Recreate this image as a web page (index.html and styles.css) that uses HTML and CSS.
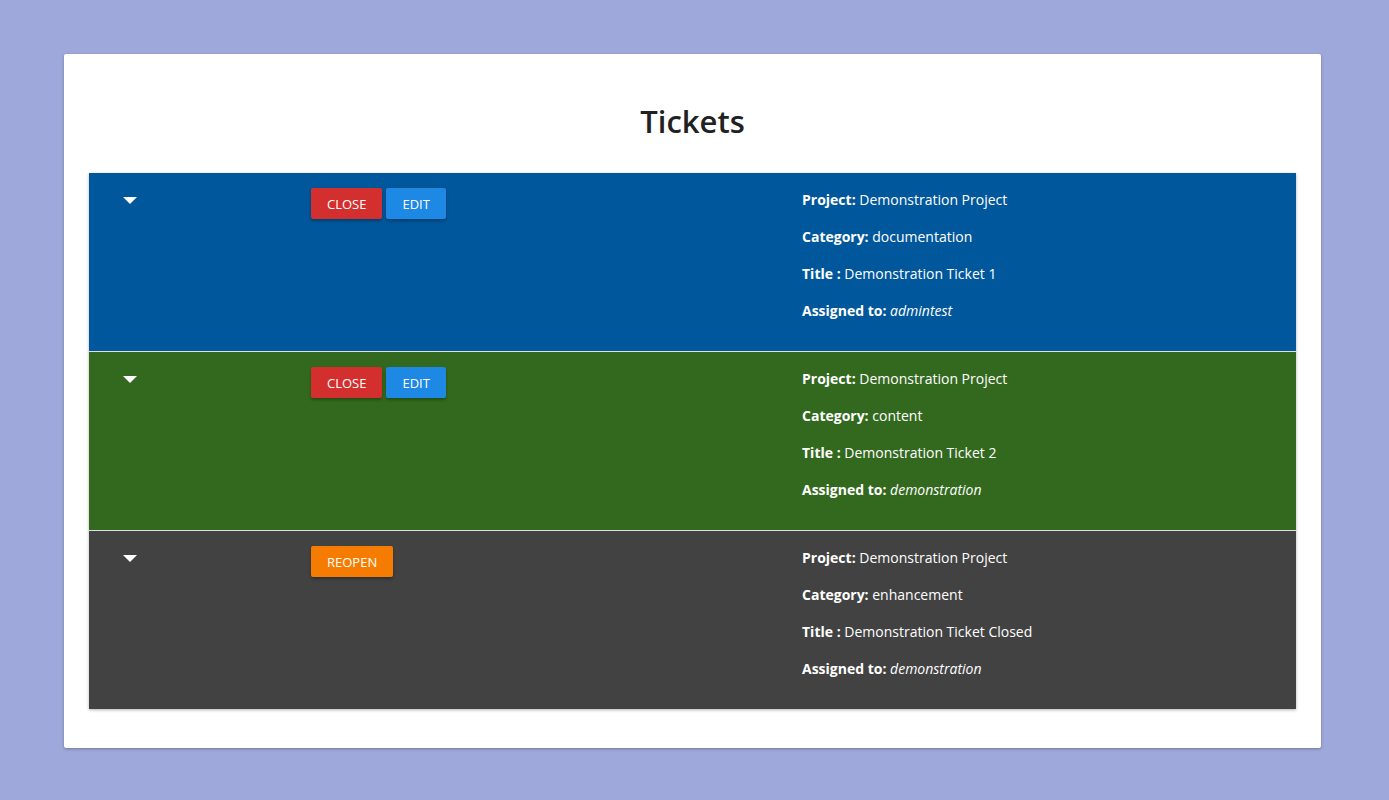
FILE: index.html
```html
<!DOCTYPE html>
<html>
<head>
<meta charset="utf-8">
<link rel="stylesheet" href="styles.css">
</head>
<body>
<div class="card">
  <h1 class="title">Tickets</h1>
  <div class="table">
    <div class="row row-blue">
      <div class="cell-toggle"><span class="caret"></span></div>
      <div class="cell-actions">
        <button class="btn btn-red">Close</button>
        <button class="btn btn-blue">Edit</button>
      </div>
      <div class="cell-info">
        <p><b>Project:</b> Demonstration Project</p>
        <p><b>Category:</b> documentation</p>
        <p><b>Title :</b> Demonstration Ticket 1</p>
        <p><b>Assigned to:</b> <i>admintest</i></p>
      </div>
    </div>
    <div class="row row-green">
      <div class="cell-toggle"><span class="caret"></span></div>
      <div class="cell-actions">
        <button class="btn btn-red">Close</button>
        <button class="btn btn-blue">Edit</button>
      </div>
      <div class="cell-info">
        <p><b>Project:</b> Demonstration Project</p>
        <p><b>Category:</b> content</p>
        <p><b>Title :</b> Demonstration Ticket 2</p>
        <p><b>Assigned to:</b> <i>demonstration</i></p>
      </div>
    </div>
    <div class="row row-grey">
      <div class="cell-toggle"><span class="caret"></span></div>
      <div class="cell-actions">
        <button class="btn btn-orange">Reopen</button>
      </div>
      <div class="cell-info">
        <p><b>Project:</b> Demonstration Project</p>
        <p><b>Category:</b> enhancement</p>
        <p><b>Title :</b> Demonstration Ticket Closed</p>
        <p><b>Assigned to:</b> <i>demonstration</i></p>
      </div>
    </div>
  </div>
</div>
</body>
</html>
```
FILE: styles.css
```css
html, body {
  margin: 0;
  padding: 0;
}
body {
  background: #9fa8da;
  font-family: "Open Sans", "Noto Sans", sans-serif;
  padding: 54px 68px 52px 64px;
}
.card {
  background: #fff;
  border-radius: 2px;
  box-shadow: 0 1px 3px rgba(0,0,0,0.3);
  padding: 25px 25px 39px 25px;
}
.title {
  margin: 0;
  height: 94px;
  line-height: 84px;
  text-align: center;
  font-size: 31px;
  font-weight: 600;
  color: #212121;
}
.table {
  box-shadow: 0 1px 3px rgba(0,0,0,0.3);
}
.row {
  display: grid;
  grid-template-columns: 222px 491px 1fr;
  height: 178px;
  box-sizing: border-box;
  color: #fff;
}
.row + .row {
  border-top: 1px solid #e0e0e0;
  height: 179px;
}
.row-blue { background: #01579b; }
.row-green { background: #33691e; }
.row-grey { background: #424242; }
.cell-toggle {
  padding: 24px 0 0 34px;
}
.caret {
  display: block;
  width: 0;
  height: 0;
  border-left: 7px solid transparent;
  border-right: 7px solid transparent;
  border-top: 7px solid #fff;
}
.cell-actions {
  padding-top: 15px;
  display: flex;
  gap: 4px;
  align-items: flex-start;
}
.btn {
  height: 31px;
  padding: 0 16px;
  border: 0;
  border-radius: 2px;
  color: #fff;
  font-family: inherit;
  font-size: 13px;
  text-transform: uppercase;
  box-shadow: 0 2px 3px rgba(0,0,0,0.3);
}
.btn-red { background: #d32f2f; }
.btn-blue { background: #1e88e5; }
.btn-orange { background: #f57c00; }
.cell-info {
  padding-top: 17px;
}
.cell-info p {
  margin: 0;
  font-size: 14px;
  line-height: 20px;
  padding-bottom: 17px;
}
.cell-info b { font-weight: 700; }
```
